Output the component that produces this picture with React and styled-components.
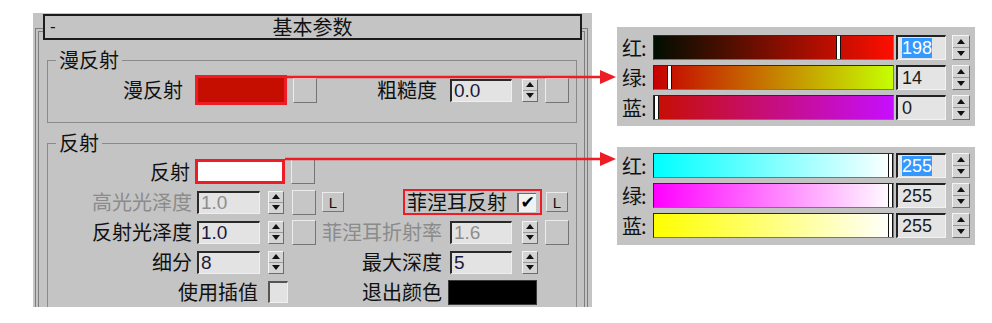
import React from "react";
import styled, { createGlobalStyle } from "styled-components";

const CJK = `"Noto Sans CJK SC", "Noto Sans", sans-serif`;
const NUM = `"Liberation Sans", Arial, sans-serif`;

const GlobalStyle = createGlobalStyle`
  html, body { margin: 0; background: #fff; }
  body { font-family: ${CJK}; color: #111; }
`;

const Page = styled.div`
  position: relative;
  width: 992px;
  height: 323px;
  box-sizing: border-box;
  padding: 13px 0 0 33px;
  display: flex;
  align-items: flex-start;
  overflow: hidden;
`;

// LEFT ROLLOUT
const Rollout = styled.div`
  flex: none;
  width: 559px;
  height: 294px;
  box-sizing: border-box;
  padding: 15px 4px 0 2px;
  background: #c4c4c4;
  overflow: hidden;
`;
const Frame = styled.div`
  height: 100%;
  box-sizing: border-box;
  border: 4px double #7e7e7e;
  border-bottom: none;
`;
const Header = styled.div`
  height: 26px;
  margin: -18px 2px 0 4px;
  box-sizing: border-box;
  border: 2px solid #1c1c1c;
  background: #c4c4c4;
  display: flex;
  align-items: center;
  font-size: 20px;
  line-height: 22px;
`;
const Toggle = styled.span`
  flex: none;
  width: 24px;
  padding-left: 5px;
  box-sizing: border-box;
  font-family: ${NUM};
  font-size: 17px;
`;
const Title = styled.span`
  flex: 1;
  text-align: center;
`;
const Group = styled.fieldset`
  margin: ${(p) => p.$mt}px 7px 0 8px;
  padding: ${(p) => p.$pt}px 0 ${(p) => p.$pb}px 0;
  border: 1px solid #8a8a8a;
  min-width: 0;
`;
const Legend = styled.legend`
  margin-left: 8px;
  padding: 0 3px;
  font-size: 20px;
  line-height: ${(p) => p.$lh}px;
`;
const Row = styled.div`
  display: flex;
  align-items: center;
  height: ${(p) => p.$h}px;
`;
const Half = styled.div`
  display: flex;
  align-items: center;
  ${(p) => (p.$w ? `flex: none; width: ${p.$w}px;` : "flex: 1;")}
`;
const Label = styled.div`
  flex: none;
  width: ${(p) => p.$w}px;
  box-sizing: border-box;
  padding-right: ${(p) => p.$pr || 0}px;
  display: flex;
  justify-content: flex-end;
  white-space: nowrap;
  font-size: 20px;
  line-height: 24px;
  color: ${(p) => (p.$disabled ? "#8b8b8b" : "#111")};
`;
const NumField = styled.div`
  flex: none;
  width: ${(p) => p.$w}px;
  height: 23px;
  margin-left: ${(p) => p.$ml}px;
  box-sizing: border-box;
  padding-left: 2px;
  background: #e3e3e3;
  border-top: 2px solid #2a2a2a;
  border-left: 2px solid #2a2a2a;
  border-right: 1px solid #efefef;
  border-bottom: 1px solid #efefef;
  font-family: ${NUM};
  font-size: 19px;
  line-height: 20px;
  color: ${(p) => (p.$disabled ? "#8e8e8e" : "#1a1a3a")};
`;
const SpinBox = styled.div`
  flex: none;
  width: ${(p) => p.$w}px;
  height: ${(p) => p.$h}px;
  margin-left: ${(p) => p.$ml}px;
  box-sizing: border-box;
  display: flex;
  flex-direction: column;
  background: #d4d4d4;
  border-top: 1px solid #f4f4f4;
  border-left: 1px solid #f4f4f4;
  border-right: 1px solid #6c6c6c;
  border-bottom: 1px solid #6c6c6c;
`;
const SpinHalf = styled.div`
  flex: 1;
  display: flex;
  align-items: center;
  justify-content: center;
  & + & {
    border-top: 1px solid #9a9a9a;
  }
  &::after {
    content: "";
    border-left: 4px solid transparent;
    border-right: 4px solid transparent;
    ${(p) =>
      p.$up ? "border-bottom: 5px solid #111;" : "border-top: 5px solid #111;"}
  }
`;
const SmallBtn = styled.div`
  flex: none;
  width: 24px;
  height: 25px;
  margin-left: ${(p) => p.$ml}px;
  box-sizing: border-box;
  background: #c6c6c6;
  border-top: 1px solid #ececec;
  border-left: 1px solid #ececec;
  border-right: 1px solid #747474;
  border-bottom: 1px solid #747474;
`;
const LBtn = styled.div`
  flex: none;
  width: 22px;
  height: 20px;
  margin-left: ${(p) => p.$ml}px;
  box-sizing: border-box;
  background: #c6c6c6;
  border-top: 1px solid #ececec;
  border-left: 1px solid #ececec;
  border-right: 1px solid #747474;
  border-bottom: 1px solid #747474;
  display: flex;
  align-items: center;
  justify-content: center;
  font-family: ${NUM};
  font-size: 15px;
  color: #111;
`;
const Swatch = styled.div`
  flex: none;
  width: ${(p) => p.$w}px;
  height: ${(p) => p.$h}px;
  margin-left: ${(p) => p.$ml}px;
  box-sizing: border-box;
  background: ${(p) => p.$fill};
  border: ${(p) => (p.$hl ? "3px solid #ee1c24" : "1px solid #3a3a3a")};
`;
const Check = styled.div`
  flex: none;
  width: 20px;
  height: 22px;
  margin-left: ${(p) => p.$ml}px;
  box-sizing: border-box;
  background: #e2e2e2;
  border-top: 2px solid #555;
  border-left: 2px solid #555;
  border-right: 1px solid #f0f0f0;
  border-bottom: 1px solid #f0f0f0;
`;
const FresnelBox = styled.div`
  flex: none;
  margin-left: ${(p) => p.$ml}px;
  height: 26px;
  box-sizing: border-box;
  padding: 0 4px 0 2px;
  border: 2px solid #ee1c24;
  display: flex;
  align-items: center;
  font-size: 20px;
  line-height: 22px;
`;
const Tick = styled.div`
  flex: none;
  width: 19px;
  height: 19px;
  margin-left: 10px;
  box-sizing: border-box;
  background: #f2f2f2;
  border-left: 2px solid #6a6a6a;
  border-top: 1px solid #6a6a6a;
  display: flex;
  align-items: center;
  justify-content: center;
  font-family: "DejaVu Sans", sans-serif;
  font-size: 17px;
  font-weight: bold;
  line-height: 1;
  color: #000;
`;

// RIGHT COLOR PANELS
const RightCol = styled.div`
  flex: none;
  width: 358px;
  margin-left: 25px;
  display: flex;
  flex-direction: column;
`;
const ColorPanel = styled.div`
  margin-top: ${(p) => p.$mt}px;
  padding: ${(p) => p.$pt}px 5px ${(p) => p.$pb}px 5px;
  background: #c3c3c3;
  display: flex;
  flex-direction: column;
  gap: 5px;
`;
const ChannelRow = styled.div`
  display: flex;
  align-items: center;
  height: 25px;
`;
const ChannelLabel = styled.div`
  flex: none;
  width: 31px;
  font-size: 20px;
  line-height: 25px;
  white-space: nowrap;
  letter-spacing: -1px;
`;
const Bar = styled.div`
  position: relative;
  flex: none;
  width: 241px;
  height: 25px;
  box-sizing: border-box;
  border: 1px solid #2c2c2c;
  border-right-color: #777;
  border-bottom-color: #777;
  background: linear-gradient(to right, ${(p) => p.$from}, ${(p) => p.$to});
`;
const Thumb = styled.div`
  position: absolute;
  top: 0;
  bottom: 0;
  width: 3px;
  background: #fff;
  border-left: 1px solid #111;
  border-right: 1px solid #111;
`;
const ValueBox = styled.div`
  flex: none;
  width: 50px;
  height: 25px;
  margin-left: 2px;
  box-sizing: border-box;
  padding: 1px 0 0 4px;
  background: #e4e4e4;
  border-top: 2px solid #222;
  border-left: 2px solid #222;
  border-right: 1px solid #f2f2f2;
  border-bottom: 1px solid #f2f2f2;
  font-family: ${NUM};
  font-size: 18px;
  line-height: 20px;
  color: #1a1a1a;
`;
const Selected = styled.span`
  background: #3399ff;
  color: #fff;
`;

const Arrows = styled.svg`
  position: absolute;
  left: 0;
  top: 0;
  pointer-events: none;
`;

const Spinner = ({ w = 16, h = 23, ml = 8 }) => (
  <SpinBox $w={w} $h={h} $ml={ml}>
    <SpinHalf $up />
    <SpinHalf />
  </SpinBox>
);

const diffuseChannels = [
  { label: "红:", from: "rgb(0,14,0)", to: "rgb(255,14,0)", value: 198, selected: true },
  { label: "绿:", from: "rgb(198,0,0)", to: "rgb(198,255,0)", value: 14 },
  { label: "蓝:", from: "rgb(198,14,0)", to: "rgb(198,14,255)", value: 0 },
];
const reflectChannels = [
  { label: "红:", from: "rgb(0,255,255)", to: "#fff", value: 255, selected: true },
  { label: "绿:", from: "rgb(255,0,255)", to: "#fff", value: 255 },
  { label: "蓝:", from: "rgb(255,255,0)", to: "#fff", value: 255 },
];

const ColorChannels = ({ channels, mt, pt, pb }) => (
  <ColorPanel $mt={mt} $pt={pt} $pb={pb}>
    {channels.map((c) => (
      <ChannelRow key={c.label}>
        <ChannelLabel>{c.label}</ChannelLabel>
        <Bar $from={c.from} $to={c.to}>
          <Thumb style={{ left: Math.round((c.value / 255) * 234) }} />
        </Bar>
        <ValueBox>{c.selected ? <Selected>{c.value}</Selected> : c.value}</ValueBox>
        <Spinner w={18} h={25} ml={6} />
      </ChannelRow>
    ))}
  </ColorPanel>
);

export default function App() {
  return (
    <>
      <GlobalStyle />
      <Page>
        <Rollout>
          <Frame>
            <Header>
              <Toggle>-</Toggle>
              <Title>基本参数</Title>
              <Toggle />
            </Header>

            <Group $mt={9} $pt={4} $pb={17}>
              <Legend $lh={22}>漫反射</Legend>
              <Row $h={30}>
                <Half $w={300}>
                  <Label $w={144} $pr={9}>漫反射</Label>
                  <Swatch $w={92} $h={30} $ml={3} $fill="#c60e00" $hl />
                  <SmallBtn $ml={6} />
                </Half>
                <Half>
                  <Label $w={94} $pr={5}>粗糙度</Label>
                  <NumField $w={62} $ml={8}>0.0</NumField>
                  <Spinner ml={10} />
                  <SmallBtn $ml={7} />
                </Half>
              </Row>
            </Group>

            <Group $mt={10} $pt={3} $pb={10}>
              <Legend $lh={20}>反射</Legend>
              <Row $h={31}>
                <Half $w={300}>
                  <Label $w={144} $pr={2}>反射</Label>
                  <Swatch $w={90} $h={25} $ml={3} $fill="#ffffff" $hl />
                  <SmallBtn $ml={6} />
                </Half>
              </Row>
              <Row $h={30}>
                <Half $w={300}>
                  <Label $w={144} $disabled>高光光泽度</Label>
                  <NumField $w={63} $ml={5} $disabled>1.0</NumField>
                  <Spinner />
                  <SmallBtn $ml={8} />
                  <LBtn $ml={6}>L</LBtn>
                </Half>
                <Half>
                  <FresnelBox $ml={55}>
                    菲涅耳反射
                    <Tick>✔</Tick>
                  </FresnelBox>
                  <LBtn $ml={4}>L</LBtn>
                </Half>
              </Row>
              <Row $h={30}>
                <Half $w={300}>
                  <Label $w={144}>反射光泽度</Label>
                  <NumField $w={63} $ml={5}>1.0</NumField>
                  <Spinner />
                  <SmallBtn $ml={8} />
                </Half>
                <Half>
                  <Label $w={94} $disabled>菲涅耳折射率</Label>
                  <NumField $w={62} $ml={8} $disabled>1.6</NumField>
                  <Spinner ml={10} />
                  <SmallBtn $ml={7} />
                </Half>
              </Row>
              <Row $h={30}>
                <Half $w={300}>
                  <Label $w={144}>细分</Label>
                  <NumField $w={63} $ml={5}>8</NumField>
                  <Spinner />
                </Half>
                <Half>
                  <Label $w={94}>最大深度</Label>
                  <NumField $w={62} $ml={8}>5</NumField>
                  <Spinner ml={10} />
                </Half>
              </Row>
              <Row $h={30}>
                <Half $w={300}>
                  <Label $w={210}>使用插值</Label>
                  <Check $ml={10} />
                </Half>
                <Half>
                  <Label $w={94}>退出颜色</Label>
                  <Swatch $w={89} $h={25} $ml={6} $fill="#000" />
                </Half>
              </Row>
            </Group>
          </Frame>
        </Rollout>

        <RightCol>
          <ColorChannels channels={diffuseChannels} mt={14} pt={8} pb={6} />
          <ColorChannels channels={reflectChannels} mt={21} pt={6} pb={7} />
        </RightCol>

        <Arrows width="992" height="323" viewBox="0 0 992 323">
          <g fill="#ee1c24" stroke="#ee1c24">
            <line x1="287" y1="77" x2="602" y2="77" strokeWidth="2.5" />
            <polygon points="600,70 616,77 600,84" stroke="none" />
            <line x1="285" y1="159" x2="602" y2="159" strokeWidth="2.5" />
            <polygon points="600,152 616,159 600,166" stroke="none" />
          </g>
        </Arrows>
      </Page>
    </>
  );
}
